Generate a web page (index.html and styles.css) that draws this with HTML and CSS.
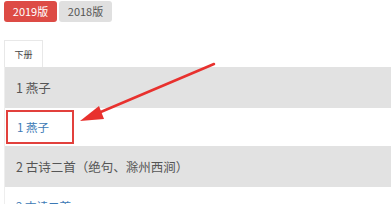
FILE: index.html
```html
<!DOCTYPE html>
<html>
  <head>
    <title>课文目录</title>
    <link rel="stylesheet" href="styles.css">
  </head>
  <body>
    <div class="versions">
      <div class="version active">2019版</div>
      <div class="version">2018版</div>
    </div>
    <div class="tabs">
      <div class="tab">下册</div>
    </div>
    <div class="lessons">
      <div class="unit">1 燕子</div>
      <div class="lesson">
        <span class="mark"><a href="#">1 燕子</a></span>
      </div>
      <div class="unit">2 古诗二首（绝句、滁州西涧）</div>
      <div class="lesson">
        <a href="#" class="plain">2 古诗二首</a>
      </div>
    </div>
    <svg class="arrow" width="391" height="204" viewBox="0 0 391 204">
      <line x1="214" y1="64" x2="96" y2="114" stroke="#e8312e" stroke-width="2.5" stroke-linecap="round"/>
      <polygon points="80,121 99,106 104,119" fill="#e8312e"/>
    </svg>
  </body>
</html>
```

FILE: styles.css
```css
body {
  background: #fff;
  color: #555;
  font-family: "Noto Sans CJK SC", "Liberation Sans", sans-serif;
  margin: 0;
  padding: 1px 0 0 4px;
  width: 391px;
  height: 204px;
  overflow: hidden;
  box-sizing: border-box;
  position: relative;
}
.versions {
  display: flex;
  gap: 2px;
}
.version {
  width: 53px;
  height: 21px;
  line-height: 21px;
  text-align: center;
  font-size: 11px;
  border-radius: 3px;
  background: #e0e0e0;
  color: #555;
}
.version.active {
  background: #dd4b45;
  color: #fff;
}
.tabs {
  display: flex;
  margin-top: 18px;
}
.tab {
  width: 39px;
  height: 27px;
  line-height: 27px;
  text-align: center;
  font-size: 9px;
  color: #444;
  border: 1px solid #e8e8e8;
  border-bottom: none;
  box-sizing: border-box;
}
.lessons {
  border-left: 1px solid #eee;
}
.unit {
  height: 41px;
  line-height: 41px;
  background: #e2e2e2;
  padding-left: 11px;
  font-size: 12.5px;
  color: #555;
}
.lesson {
  height: 38px;
  display: flex;
  align-items: center;
}
.mark {
  display: flex;
  align-items: center;
  width: 68px;
  height: 34px;
  margin-left: 1px;
  padding-left: 9px;
  border: 2px solid #e2403c;
  box-sizing: border-box;
}
a {
  color: #3c79b5;
  text-decoration: none;
  font-size: 11.5px;
}
.plain {
  padding-left: 11px;
}
.arrow {
  position: absolute;
  left: 0;
  top: 0;
}
```
